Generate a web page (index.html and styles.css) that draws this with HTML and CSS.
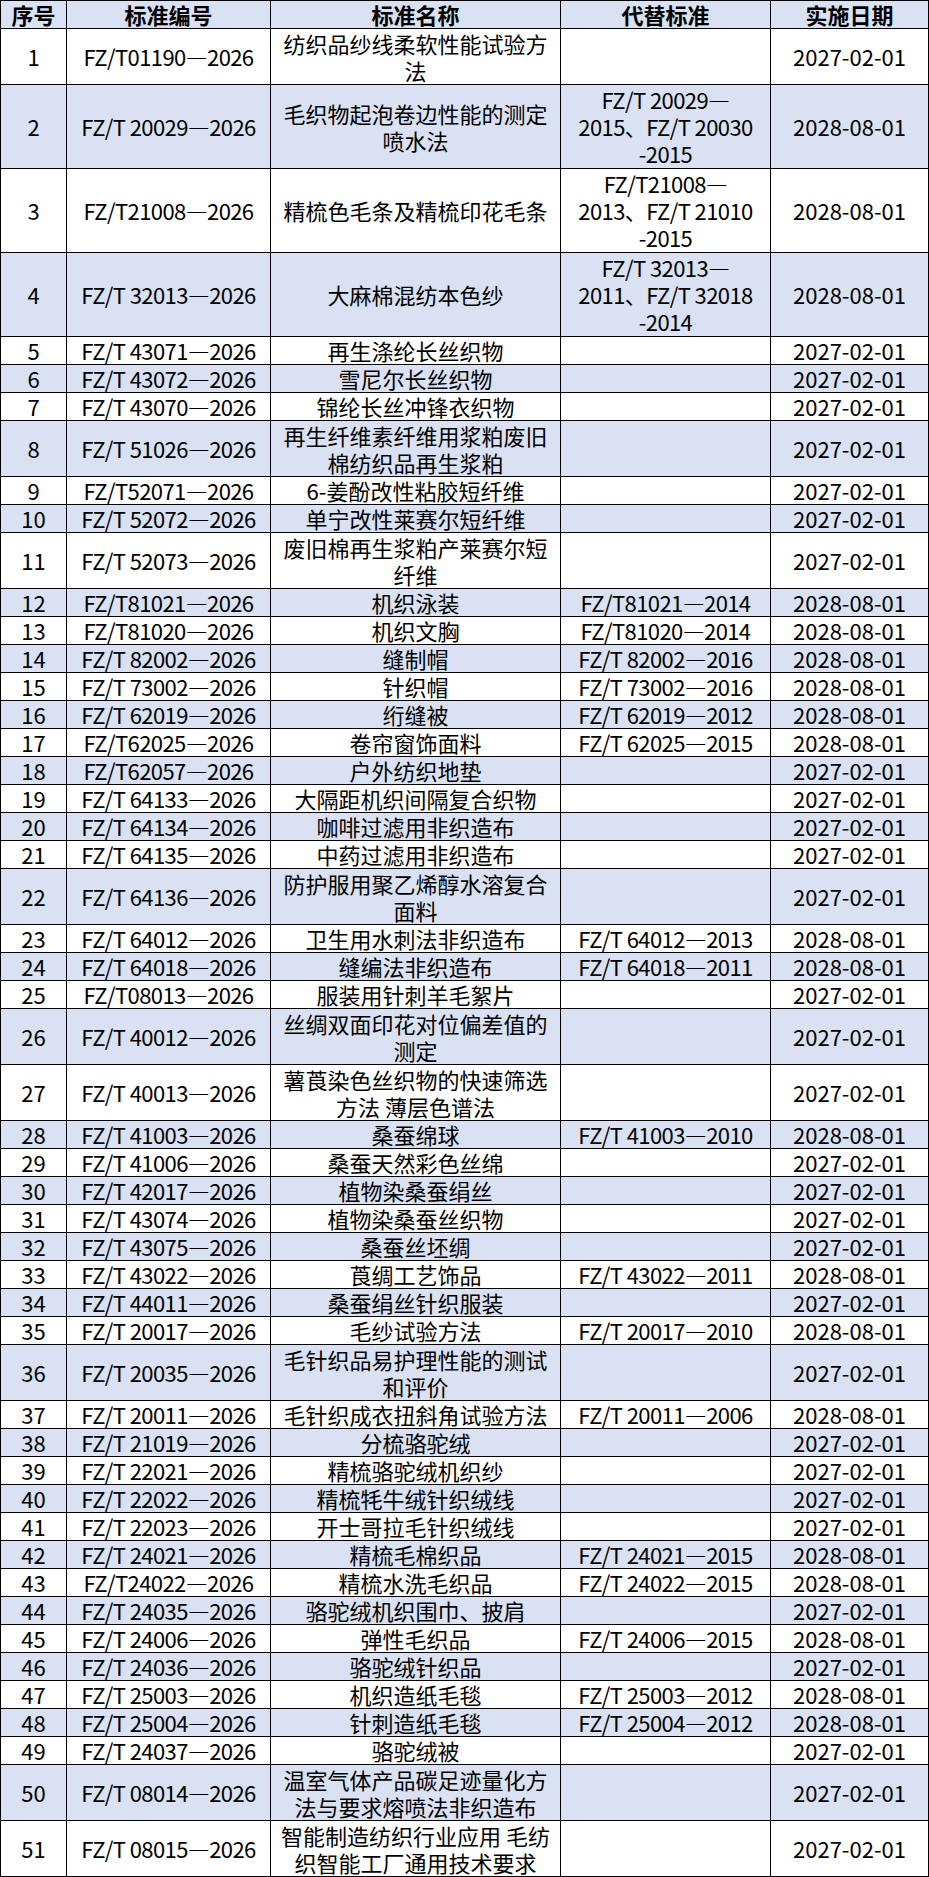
FILE: index.html
```html
<!DOCTYPE html>
<html lang="zh-CN">
<head>
<meta charset="utf-8">
<title>纺织行业标准</title>
<link rel="stylesheet" href="styles.css">
</head>
<body>
<table class="std-table">
  <colgroup>
    <col class="c-no">
    <col class="c-code">
    <col class="c-name">
    <col class="c-repl">
    <col class="c-date">
  </colgroup>
  <thead>
    <tr class="h1"><th>序号</th><th>标准编号</th><th>标准名称</th><th>代替标准</th><th>实施日期</th></tr>
  </thead>
  <tbody>
    <tr class="h2"><td>1</td><td>FZ/T01190—2026</td><td>纺织品纱线柔软性能试验方<br>法</td><td></td><td>2027-02-01</td></tr>
    <tr class="h3"><td>2</td><td>FZ/T 20029—2026</td><td>毛织物起泡卷边性能的测定<br>喷水法</td><td>FZ/T 20029—<br>2015、FZ/T 20030<br>-2015</td><td>2028-08-01</td></tr>
    <tr class="h3"><td>3</td><td>FZ/T21008—2026</td><td>精梳色毛条及精梳印花毛条</td><td>FZ/T21008—<br>2013、FZ/T 21010<br>-2015</td><td>2028-08-01</td></tr>
    <tr class="h3"><td>4</td><td>FZ/T 32013—2026</td><td>大麻棉混纺本色纱</td><td>FZ/T 32013—<br>2011、FZ/T 32018<br>-2014</td><td>2028-08-01</td></tr>
    <tr class="h1"><td>5</td><td>FZ/T 43071—2026</td><td>再生涤纶长丝织物</td><td></td><td>2027-02-01</td></tr>
    <tr class="h1"><td>6</td><td>FZ/T 43072—2026</td><td>雪尼尔长丝织物</td><td></td><td>2027-02-01</td></tr>
    <tr class="h1"><td>7</td><td>FZ/T 43070—2026</td><td>锦纶长丝冲锋衣织物</td><td></td><td>2027-02-01</td></tr>
    <tr class="h2"><td>8</td><td>FZ/T 51026—2026</td><td>再生纤维素纤维用浆粕废旧<br>棉纺织品再生浆粕</td><td></td><td>2027-02-01</td></tr>
    <tr class="h1"><td>9</td><td>FZ/T52071—2026</td><td>6-姜酚改性粘胶短纤维</td><td></td><td>2027-02-01</td></tr>
    <tr class="h1"><td>10</td><td>FZ/T 52072—2026</td><td>单宁改性莱赛尔短纤维</td><td></td><td>2027-02-01</td></tr>
    <tr class="h2"><td>11</td><td>FZ/T 52073—2026</td><td>废旧棉再生浆粕产莱赛尔短<br>纤维</td><td></td><td>2027-02-01</td></tr>
    <tr class="h1"><td>12</td><td>FZ/T81021—2026</td><td>机织泳装</td><td>FZ/T81021—2014</td><td>2028-08-01</td></tr>
    <tr class="h1"><td>13</td><td>FZ/T81020—2026</td><td>机织文胸</td><td>FZ/T81020—2014</td><td>2028-08-01</td></tr>
    <tr class="h1"><td>14</td><td>FZ/T 82002—2026</td><td>缝制帽</td><td>FZ/T 82002—2016</td><td>2028-08-01</td></tr>
    <tr class="h1"><td>15</td><td>FZ/T 73002—2026</td><td>针织帽</td><td>FZ/T 73002—2016</td><td>2028-08-01</td></tr>
    <tr class="h1"><td>16</td><td>FZ/T 62019—2026</td><td>绗缝被</td><td>FZ/T 62019—2012</td><td>2028-08-01</td></tr>
    <tr class="h1"><td>17</td><td>FZ/T62025—2026</td><td>卷帘窗饰面料</td><td>FZ/T 62025—2015</td><td>2028-08-01</td></tr>
    <tr class="h1"><td>18</td><td>FZ/T62057—2026</td><td>户外纺织地垫</td><td></td><td>2027-02-01</td></tr>
    <tr class="h1"><td>19</td><td>FZ/T 64133—2026</td><td>大隔距机织间隔复合织物</td><td></td><td>2027-02-01</td></tr>
    <tr class="h1"><td>20</td><td>FZ/T 64134—2026</td><td>咖啡过滤用非织造布</td><td></td><td>2027-02-01</td></tr>
    <tr class="h1"><td>21</td><td>FZ/T 64135—2026</td><td>中药过滤用非织造布</td><td></td><td>2027-02-01</td></tr>
    <tr class="h2"><td>22</td><td>FZ/T 64136—2026</td><td>防护服用聚乙烯醇水溶复合<br>面料</td><td></td><td>2027-02-01</td></tr>
    <tr class="h1"><td>23</td><td>FZ/T 64012—2026</td><td>卫生用水刺法非织造布</td><td>FZ/T 64012—2013</td><td>2028-08-01</td></tr>
    <tr class="h1"><td>24</td><td>FZ/T 64018—2026</td><td>缝编法非织造布</td><td>FZ/T 64018—2011</td><td>2028-08-01</td></tr>
    <tr class="h1"><td>25</td><td>FZ/T08013—2026</td><td>服装用针刺羊毛絮片</td><td></td><td>2027-02-01</td></tr>
    <tr class="h2"><td>26</td><td>FZ/T 40012—2026</td><td>丝绸双面印花对位偏差值的<br>测定</td><td></td><td>2027-02-01</td></tr>
    <tr class="h2"><td>27</td><td>FZ/T 40013—2026</td><td>薯莨染色丝织物的快速筛选<br>方法 薄层色谱法</td><td></td><td>2027-02-01</td></tr>
    <tr class="h1"><td>28</td><td>FZ/T 41003—2026</td><td>桑蚕绵球</td><td>FZ/T 41003—2010</td><td>2028-08-01</td></tr>
    <tr class="h1"><td>29</td><td>FZ/T 41006—2026</td><td>桑蚕天然彩色丝绵</td><td></td><td>2027-02-01</td></tr>
    <tr class="h1"><td>30</td><td>FZ/T 42017—2026</td><td>植物染桑蚕绢丝</td><td></td><td>2027-02-01</td></tr>
    <tr class="h1"><td>31</td><td>FZ/T 43074—2026</td><td>植物染桑蚕丝织物</td><td></td><td>2027-02-01</td></tr>
    <tr class="h1"><td>32</td><td>FZ/T 43075—2026</td><td>桑蚕丝坯绸</td><td></td><td>2027-02-01</td></tr>
    <tr class="h1"><td>33</td><td>FZ/T 43022—2026</td><td>莨绸工艺饰品</td><td>FZ/T 43022—2011</td><td>2028-08-01</td></tr>
    <tr class="h1"><td>34</td><td>FZ/T 44011—2026</td><td>桑蚕绢丝针织服装</td><td></td><td>2027-02-01</td></tr>
    <tr class="h1"><td>35</td><td>FZ/T 20017—2026</td><td>毛纱试验方法</td><td>FZ/T 20017—2010</td><td>2028-08-01</td></tr>
    <tr class="h2"><td>36</td><td>FZ/T 20035—2026</td><td>毛针织品易护理性能的测试<br>和评价</td><td></td><td>2027-02-01</td></tr>
    <tr class="h1"><td>37</td><td>FZ/T 20011—2026</td><td>毛针织成衣扭斜角试验方法</td><td>FZ/T 20011—2006</td><td>2028-08-01</td></tr>
    <tr class="h1"><td>38</td><td>FZ/T 21019—2026</td><td>分梳骆驼绒</td><td></td><td>2027-02-01</td></tr>
    <tr class="h1"><td>39</td><td>FZ/T 22021—2026</td><td>精梳骆驼绒机织纱</td><td></td><td>2027-02-01</td></tr>
    <tr class="h1"><td>40</td><td>FZ/T 22022—2026</td><td>精梳牦牛绒针织绒线</td><td></td><td>2027-02-01</td></tr>
    <tr class="h1"><td>41</td><td>FZ/T 22023—2026</td><td>开士哥拉毛针织绒线</td><td></td><td>2027-02-01</td></tr>
    <tr class="h1"><td>42</td><td>FZ/T 24021—2026</td><td>精梳毛棉织品</td><td>FZ/T 24021—2015</td><td>2028-08-01</td></tr>
    <tr class="h1"><td>43</td><td>FZ/T24022—2026</td><td>精梳水洗毛织品</td><td>FZ/T 24022—2015</td><td>2028-08-01</td></tr>
    <tr class="h1"><td>44</td><td>FZ/T 24035—2026</td><td>骆驼绒机织围巾、披肩</td><td></td><td>2027-02-01</td></tr>
    <tr class="h1"><td>45</td><td>FZ/T 24006—2026</td><td>弹性毛织品</td><td>FZ/T 24006—2015</td><td>2028-08-01</td></tr>
    <tr class="h1"><td>46</td><td>FZ/T 24036—2026</td><td>骆驼绒针织品</td><td></td><td>2027-02-01</td></tr>
    <tr class="h1"><td>47</td><td>FZ/T 25003—2026</td><td>机织造纸毛毯</td><td>FZ/T 25003—2012</td><td>2028-08-01</td></tr>
    <tr class="h1"><td>48</td><td>FZ/T 25004—2026</td><td>针刺造纸毛毯</td><td>FZ/T 25004—2012</td><td>2028-08-01</td></tr>
    <tr class="h1"><td>49</td><td>FZ/T 24037—2026</td><td>骆驼绒被</td><td></td><td>2027-02-01</td></tr>
    <tr class="h2"><td>50</td><td>FZ/T 08014—2026</td><td>温室气体产品碳足迹量化方<br>法与要求熔喷法非织造布</td><td></td><td>2027-02-01</td></tr>
    <tr class="h2"><td>51</td><td>FZ/T 08015—2026</td><td>智能制造纺织行业应用 毛纺<br>织智能工厂通用技术要求</td><td></td><td>2027-02-01</td></tr>
  </tbody>
</table>
</body>
</html>
```

FILE: styles.css
```css
html, body {
  margin: 0;
  padding: 0;
  background: #ffffff;
}

.std-table {
  table-layout: fixed;
  width: 929px;
  border-collapse: separate;
  border-spacing: 0;
  border-top: 1px solid #000;
  border-left: 1px solid #000;
  font-family: "Noto Sans CJK SC", "Noto Sans", sans-serif;
  font-size: 22px;
  line-height: 27px;
  color: #000;
}

.c-no { width: 66px; }
.c-code { width: 204px; }
.c-name { width: 290px; }
.c-repl { width: 210px; }
.c-date { width: 158px; }

.std-table th,
.std-table td {
  box-sizing: border-box;
  padding: 0;
  border-right: 1px solid #000;
  border-bottom: 1px solid #000;
  text-align: center;
  vertical-align: middle;
  white-space: nowrap;
}

.std-table td:nth-child(2),
.std-table td:nth-child(4) {
  letter-spacing: -0.6px;
}

.std-table th {
  font-weight: bold;
  background: #d9e1f2;
}

.std-table tbody tr:nth-child(even) td {
  background: #d9e1f2;
}

.h1 { height: 28px; }
.h2 { height: 56px; }
.h3 { height: 84px; }
```
